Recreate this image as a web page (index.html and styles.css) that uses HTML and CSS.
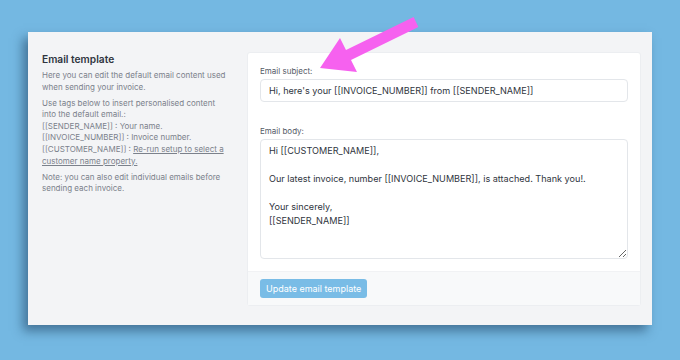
FILE: index.html
```
<html>
<head>
<meta http-equiv="content-type" content="text/html; charset=utf-8">
<meta name="viewport" content="width=device-width, initial-scale=1">
<link rel="stylesheet" href="styles.css">
<title>Email template</title>
</head>
<body>
<div class=panel>
<div class=intro>
<h2>Email template</h2>
<p>Here you can edit the default email content used when sending your invoice.</p>
<p>Use tags below to insert personalised content into the default email.:<br>
[[SENDER_NAME]] : Your name.<br>
[[INVOICE_NUMBER]] : Invoice number.<br>
[[CUSTOMER_NAME]] : <a href="#">Re-run setup to select a</a><br>
<a href="#">customer name property.</a></p>
<p>Note: you can also edit individual emails before sending each invoice.</p>
</div>
<div class=card>
<div class=fields>
<label class=label for=subject>Email subject:</label>
<input class=field id=subject type=text value="Hi, here's your [[INVOICE_NUMBER]] from [[SENDER_NAME]]">
<label class="label gap" for=body>Email body:</label>
<textarea class="field area" id=body>Hi [[CUSTOMER_NAME]],

Our latest invoice, number [[INVOICE_NUMBER]], is attached. Thank you!.

Your sincerely,
[[SENDER_NAME]]</textarea>
</div>
<div class=foot>
<button class=btn>Update email template</button>
</div>
</div>
</div>
<svg class=arrow width=680 height=90 viewBox="0 0 680 90">
<polygon points="320,68 340,38 346,50 413.6,17 418.4,27 351,60 357,72" fill="#f661ef"/>
</svg>
</body>
</html>
```

FILE: styles.css
```
html,body{margin:0;height:100%}
body{background:#74b8e2;font-family:"Inter","Noto Sans",sans-serif;overflow:hidden}
.panel{display:flex;gap:18px;margin:32px 0 0 28px;width:624px;height:293px;box-sizing:border-box;
padding:20px 11px 19px 14px;background:#f3f4f6;box-shadow:-5px 6px 10px rgba(20,50,80,0.5)}
.intro{width:187px;color:#7b818b;font-size:8px;line-height:11.6px}
.intro h2{margin:0 0 3px 0;font-size:10.2px;line-height:15px;font-weight:600;color:#2f3540}
.intro p{margin:0 0 4.5px 0}
.intro a{color:#7b818b;text-underline-offset:1px}
.card{flex:1;display:flex;flex-direction:column;background:#fff;border:1px solid #eceef1;border-radius:3px}
.fields{display:flex;flex-direction:column;padding:12px 12px 12px 12px}
.label{font-size:8px;line-height:12px;color:#555b66;margin-bottom:2px}
.gap{margin-top:23px}
.field{font-family:"Inter","Noto Sans",sans-serif;font-size:9.1px;color:#2f3540;border:1px solid #e3e6ea;
border-radius:4px;padding:0 8px;height:23px;box-sizing:border-box;outline:none;background:#fff}
.area{height:120px;padding:4px 8px 3px 8px;line-height:14px;resize:vertical}
.foot{flex:1;background:#f8f9fa;padding:7px 12px;border-top:1px solid #f1f2f4}
.btn{font-family:"Inter","Noto Sans",sans-serif;font-size:9px;color:#fff;background:#79bce6;border:0;
border-radius:3px;height:19px;padding:0 6px}
.arrow{position:absolute;left:0;top:0}
```
